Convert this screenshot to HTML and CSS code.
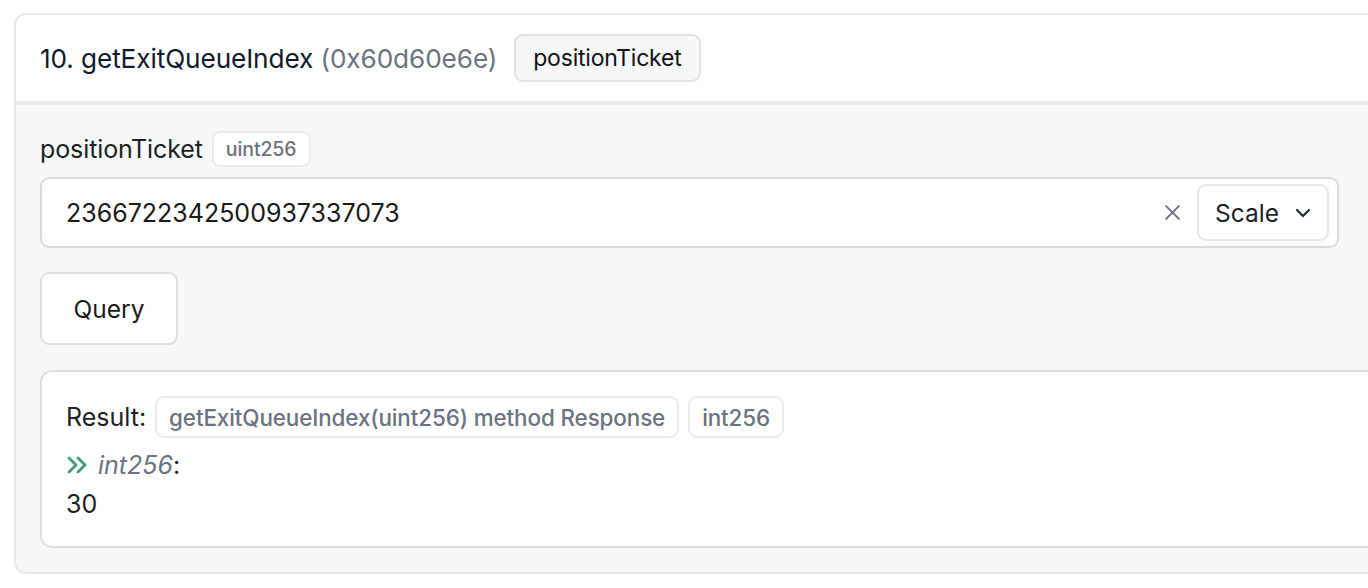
FILE: index.html
```html
<!DOCTYPE html>
<html>
<head>
<meta charset="utf-8">
<link rel="stylesheet" href="styles.css">
</head>
<body>
<div class="page">
  <div class="card">
    <div class="card-head">
      <span class="title">10. getExitQueueIndex <span class="sig">(0x60d60e6e)</span></span>
      <span class="head-badge">positionTicket</span>
    </div>
    <div class="card-body">
      <div class="field-label">
        <span>positionTicket</span>
        <span class="type-badge">uint256</span>
      </div>
      <div class="input">
        <span class="input-value">2366722342500937337073</span>
        <span class="clear">
          <svg width="17" height="17" viewBox="0 0 16 16"><path d="M2 2L14 14M14 2L2 14" stroke="#6b7280" stroke-width="1.8" stroke-linecap="round"/></svg>
        </span>
        <span class="select">Scale
          <svg width="16" height="10" viewBox="0 0 16 10"><path d="M2 2L8 8L14 2" stroke="#1f2937" stroke-width="2.2" fill="none" stroke-linecap="round" stroke-linejoin="round"/></svg>
        </span>
      </div>
      <div class="query-row"><button class="query">Query</button></div>
      <div class="result">
        <div class="result-head">
          <span>Result:</span>
          <span class="res-badge">getExitQueueIndex(uint256) method Response</span>
          <span class="res-badge">int256</span>
        </div>
        <div class="out-name">
          <svg width="24" height="20" viewBox="0 0 24 20"><path d="M3 3L10 10L3 17M12 3L19 10L12 17" stroke="#3a9b7a" stroke-width="2.8" fill="none" stroke-linecap="round" stroke-linejoin="round"/></svg>
          <span><em>int256</em>:</span>
        </div>
        <div class="out-value">30</div>
      </div>
    </div>
  </div>
</div>
</body>
</html>
```

FILE: styles.css
```css
* { box-sizing: border-box; }
html, body { margin: 0; padding: 0; background: #ffffff; overflow: hidden; }
body {
  font-family: Inter, "Noto Sans", "Liberation Sans", sans-serif;
  color: #1c1f24;
  width: 1368px;
  height: 588px;
}
.page { padding: 13px 0 0 14px; }
.card {
  width: 1420px;
  border: 2px solid #e7e8ec;
  border-radius: 12px;
  overflow: hidden;
  background: #f7f8fa;
}
.card-head {
  background: #fff;
  height: 90px;
  border-bottom: 4px solid #ebecf0;
  display: flex;
  align-items: center;
  padding: 0 0 0 24px;
  gap: 17px;
}
.title { font-size: 26.2px; color: #0f1a2c; letter-spacing: -0.1px; }
.sig { color: #6b7280; }
.head-badge {
  font-size: 23px;
  letter-spacing: -0.2px;
  padding: 0 17px;
  height: 48px;
  display: inline-flex;
  align-items: center;
  background: #f6f7f9;
  border: 2px solid #dfe1e5;
  border-radius: 9px;
  color: #111;
}
.card-body { padding: 26px 24px 24px 24px; }
.field-label {
  display: flex;
  align-items: center;
  gap: 9px;
  font-size: 25px;
  letter-spacing: -0.1px;
  height: 36px;
}
.type-badge {
  font-size: 19.5px;
  color: #6b7280;
  background: #fff;
  border: 2px solid #eaebee;
  border-radius: 8px;
  height: 36px;
  padding: 0 12px;
  display: inline-flex;
  align-items: center;
  font-weight: 500;
}
.input {
  margin-top: 10px;
  width: 1299px;
  height: 71px;
  background: #fff;
  border: 2px solid #d8dadf;
  border-radius: 9px;
  display: flex;
  align-items: center;
  padding: 0 8px 0 24px;
}
.input-value { font-size: 25px; flex: 1; color: #1a1a1a; }
.clear { display: flex; align-items: center; margin-right: 16px; }
.select {
  height: 57px;
  width: 132px;
  border: 2px solid #e6e7eb;
  border-radius: 9px;
  display: flex;
  align-items: center;
  justify-content: space-between;
  padding: 0 16px 0 16px;
  font-size: 24.5px;
}
.query-row { margin-top: 24px; }
.query {
  font-family: inherit;
  width: 138px;
  height: 73px;
  background: #fff;
  border: 2px solid #dcdee2;
  border-radius: 9px;
  font-size: 24.5px;
  color: #1a1a1a;
  cursor: pointer;
  padding: 0;
}
.result {
  margin-top: 25px;
  background: #fff;
  border: 2px solid #dcdee2;
  border-radius: 12px;
  height: 178px;
  padding: 24px 24px;
}
.result-head {
  display: flex;
  align-items: center;
  gap: 9px;
  font-size: 25px;
  height: 42px;
}
.res-badge {
  font-size: 22.4px;
  color: #6b7280;
  border: 2px solid #eaebee;
  border-radius: 9px;
  height: 42px;
  padding: 0 12px;
  display: inline-flex;
  align-items: center;
  font-weight: 500;
  letter-spacing: -0.1px;
}
.out-name {
  margin-top: 12px;
  display: flex;
  align-items: center;
  gap: 8px;
  font-size: 25px;
  height: 30px;
}
.out-name em { color: #6b7280; }
.out-value { margin-top: 9px; font-size: 25px; line-height: 30px; }
```
